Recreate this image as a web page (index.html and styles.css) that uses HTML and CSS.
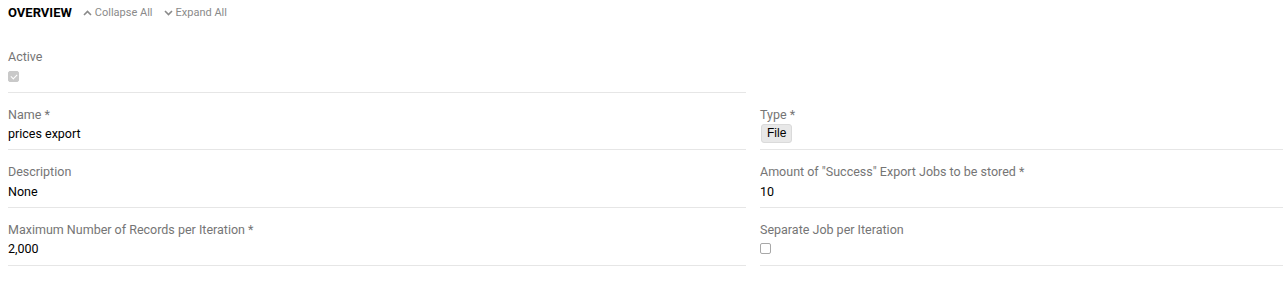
FILE: index.html
```html
<!DOCTYPE html>
<html lang="en">
  <head>
    <meta charset="UTF-8" />
    <meta name="viewport" content="width=device-width, initial-scale=1.0" />
    <title>Export Overview</title>
    <link rel="stylesheet" href="styles.css">
  </head>
  <body>
    <!-- Section header with collapse / expand links -->
    <div class="section-head">
      <span class="section-title">OVERVIEW</span>
      <a class="toggle-link" href="#">
        <svg width="9" height="6" viewBox="0 0 9 6"><path d="M1 5 L4.5 1.5 L8 5" fill="none" stroke="currentColor" stroke-width="1.6"/></svg>
        Collapse All
      </a>
      <a class="toggle-link" href="#">
        <svg width="9" height="6" viewBox="0 0 9 6"><path d="M1 1 L4.5 4.5 L8 1" fill="none" stroke="currentColor" stroke-width="1.6"/></svg>
        Expand All
      </a>
    </div>

    <!-- Two column grid of read-only fields -->
    <div class="field-grid">
      <div class="field">
        <div class="field-label">Active</div>
        <div class="field-value"><span class="check check-on"></span></div>
      </div>
      <div class="field-empty"></div>

      <div class="field">
        <div class="field-label">Name *</div>
        <div class="field-value">prices export</div>
      </div>
      <div class="field">
        <div class="field-label">Type *</div>
        <div class="field-value"><span class="badge">File</span></div>
      </div>

      <div class="field">
        <div class="field-label">Description</div>
        <div class="field-value">None</div>
      </div>
      <div class="field">
        <div class="field-label">Amount of "Success" Export Jobs to be stored *</div>
        <div class="field-value">10</div>
      </div>

      <div class="field">
        <div class="field-label">Maximum Number of Records per Iteration *</div>
        <div class="field-value">2,000</div>
      </div>
      <div class="field">
        <div class="field-label">Separate Job per Iteration</div>
        <div class="field-value"><span class="check"></span></div>
      </div>
    </div>
  </body>
</html>
```

FILE: styles.css
```css
body {
  margin: 0;
  padding: 0 0 0 8px;
  font-family: Roboto, "Liberation Sans", sans-serif;
  background-color: #fff;
  color: #000;
}
.section-head {
  display: flex;
  align-items: center;
  height: 25px;
  gap: 11px;
}
.section-title {
  font-size: 13px;
  font-weight: bold;
  color: #000;
}
.toggle-link {
  display: flex;
  align-items: center;
  gap: 3px;
  font-size: 11px;
  color: #8a8a8a;
  text-decoration: none;
}
.field-grid {
  display: grid;
  grid-template-columns: 738px 1fr;
  column-gap: 14px;
  margin-top: 10px;
}
.field {
  padding: 14px 0 7.67px;
  border-bottom: 1px solid #e6e6e6;
}
.field-label {
  font-size: 12.5px;
  line-height: 16px;
  color: #757575;
  margin-bottom: 3px;
}
.field-value {
  display: flex;
  align-items: center;
  height: 16px;
  font-size: 12.5px;
  color: #000;
}
.check {
  display: inline-block;
  box-sizing: border-box;
  width: 11px;
  height: 11px;
  border: 1px solid #a8a8a8;
  border-radius: 2px;
  background-color: #fff;
  position: relative;
}
.check-on {
  border-color: #c9c9c9;
  background-color: #c9c9c9;
}
.check-on::after {
  content: "";
  position: absolute;
  left: 3px;
  top: 1px;
  width: 3px;
  height: 5px;
  border: solid #fff;
  border-width: 0 1.5px 1.5px 0;
  transform: rotate(45deg);
}
.badge {
  display: inline-block;
  font-family: "Liberation Sans", Arial, sans-serif;
  font-size: 12px;
  line-height: 17px;
  padding: 0 5px;
  margin-left: 1px;
  background-color: #e8e8e8;
  border: 1px solid #dadada;
  border-radius: 3px;
  color: #000;
}
```
